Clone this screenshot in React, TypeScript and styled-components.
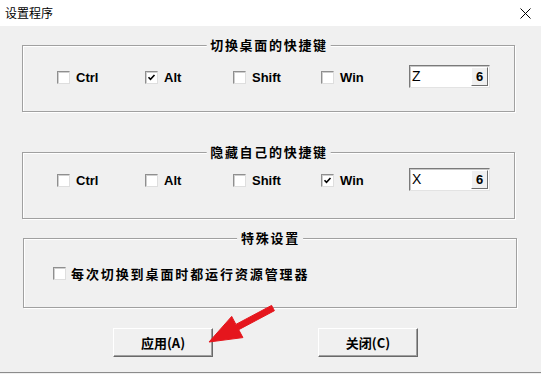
import React from "react";
import styled, { createGlobalStyle } from "styled-components";

const Global = createGlobalStyle`
  * { box-sizing: border-box; }
  html, body { margin: 0; padding: 0; background: #f0f0f0; }
  body { width: 541px; height: 374px; overflow: hidden; }
`;

const Window = styled.div`
  position: relative;
  width: 541px;
  height: 373px;
  background: #f0f0f0;
  border-bottom: 1px solid #8c8c8c;
  display: flex;
  flex-direction: column;
  font-family: "Liberation Sans", "Noto Sans CJK SC", sans-serif;
  color: #000;
`;

const TitleBar = styled.div`
  height: 26px;
  background: #fff;
  display: flex;
  align-items: center;
  justify-content: space-between;
  padding: 0 10px 0 5px;
`;

const TitleText = styled.span`
  font-family: "Noto Sans CJK SC", sans-serif;
  font-size: 12px;
  line-height: 1;
  color: #000;
  margin-top: -1px;
`;

const Group = styled.div<{ $top: number; $left: number; $width: number; $height: number; $padTop: number; $padLeft: number }>`
  position: relative;
  margin-top: ${(p) => p.$top}px;
  margin-left: ${(p) => p.$left}px;
  width: ${(p) => p.$width}px;
  height: ${(p) => p.$height}px;
  border: 1px solid #a0a0a0;
  box-shadow: inset 1px 1px 0 #fff, 1px 1px 0 #fff;
  padding-top: ${(p) => p.$padTop}px;
  padding-left: ${(p) => p.$padLeft}px;
`;

const GroupTitle = styled.span`
  position: absolute;
  top: -9px;
  left: 50%;
  transform: translateX(-50%);
  background: #f0f0f0;
  padding: 0 3px 0 4px;
  font-family: "Noto Sans CJK SC", sans-serif;
  font-weight: 700;
  font-size: 13px;
  line-height: 16px;
  letter-spacing: 1.7px;
  white-space: nowrap;
`;

const KeyRow = styled.div`
  display: grid;
  grid-template-columns: 88px 88px 88px 88px 81px;
  align-items: center;
  height: 23px;
`;

const CheckItem = styled.label`
  display: flex;
  align-items: center;
  gap: 6px;
  margin-top: 2px;
`;

const Box = styled.span`
  width: 13px;
  height: 13px;
  background: #fff;
  border: 1px solid;
  border-color: #8f8f8f #dedede #dedede #8f8f8f;
  box-shadow: inset 1px 1px 0 #cfcfcf;
  display: flex;
  align-items: center;
  justify-content: center;
`;

const KeyLabel = styled.span`
  font-family: "Liberation Sans", sans-serif;
  font-weight: 700;
  font-size: 13px;
  line-height: 1;
`;

const KeyBox = styled.div`
  width: 81px;
  height: 23px;
  background: #fff;
  border: 1px solid;
  border-color: #7a7a7a #e3e3e3 #e3e3e3 #7a7a7a;
  box-shadow: inset 1px 1px 0 #c8c8c8;
  display: flex;
  align-items: stretch;
  justify-content: space-between;
  padding: 1px 1px 1px 2px;
`;

const KeyChar = styled.span`
  font-family: "Liberation Sans", sans-serif;
  font-size: 14px;
  line-height: 19px;
`;

const KeyCode = styled.span`
  width: 17px;
  background: #f0f0f0;
  border: 1px solid;
  border-color: #fff #6e6e6e #6e6e6e #fff;
  font-family: "Liberation Sans", sans-serif;
  font-weight: 700;
  font-size: 13px;
  line-height: 18px;
  text-align: center;
`;

const OptionItem = styled.label`
  display: flex;
  align-items: center;
  gap: 5px;
`;

const OptionText = styled.span`
  font-family: "Noto Sans CJK SC", sans-serif;
  font-weight: 700;
  font-size: 13px;
  line-height: 13px;
  letter-spacing: 1.9px;
`;

const ButtonRow = styled.div`
  display: flex;
  margin-top: 20px;
  padding-left: 113px;
  gap: 105px;
`;

const Button = styled.button`
  width: 100px;
  height: 29px;
  background: #f0f0f0;
  border: 1px solid;
  border-color: #fff #696969 #696969 #fff;
  box-shadow: inset -1px -1px 0 #a0a0a0;
  padding: 0;
  font-family: "Noto Sans CJK SC", sans-serif;
  font-weight: 700;
  font-size: 13px;
  color: #000;
`;

const Arrow = styled.svg`
  position: absolute;
  left: 200px;
  top: 300px;
  pointer-events: none;
`;

const Check = ({ on }: { on: boolean }) => (
  <Box>
    {on && (
      <svg width="9" height="9" viewBox="0 0 9 9">
        <path d="M1.5 4.2 L3.5 6.3 L7.5 2" fill="none" stroke="#000" strokeWidth="1.6" />
      </svg>
    )}
  </Box>
);

const keys = ["Ctrl", "Alt", "Shift", "Win"];

const KeyGroup = ({
  title,
  checked,
  ch,
  top,
  padTop,
}: {
  title: string;
  checked: string;
  ch: string;
  top: number;
  padTop: number;
}) => (
  <Group $top={top} $left={22} $width={493} $height={67} $padTop={padTop} $padLeft={34}>
    <GroupTitle>{title}</GroupTitle>
    <KeyRow>
      {keys.map((k) => (
        <CheckItem key={k}>
          <Check on={k === checked} />
          <KeyLabel>{k}</KeyLabel>
        </CheckItem>
      ))}
      <KeyBox>
        <KeyChar>{ch}</KeyChar>
        <KeyCode>6</KeyCode>
      </KeyBox>
    </KeyRow>
  </Group>
);

export default function App() {
  return (
    <>
      <Global />
      <Window>
        <TitleBar>
          <TitleText>设置程序</TitleText>
          <svg width="11" height="11" viewBox="0 0 11 11">
            <path d="M0.5 0.5 L10.5 10.5 M10.5 0.5 L0.5 10.5" stroke="#000" strokeWidth="1" />
          </svg>
        </TitleBar>
        <KeyGroup title="切换桌面的快捷键" checked="Alt" ch="Z" top={19} padTop={19} />
        <KeyGroup title="隐藏自己的快捷键" checked="Win" ch="X" top={40} padTop={15} />
        <Group $top={19} $left={23} $width={494} $height={70} $padTop={28} $padLeft={29}>
          <GroupTitle>特殊设置</GroupTitle>
          <OptionItem>
            <Check on={false} />
            <OptionText>每次切换到桌面时都运行资源管理器</OptionText>
          </OptionItem>
        </Group>
        <ButtonRow>
          <Button>应用(A)</Button>
          <Button>关闭(C)</Button>
        </ButtonRow>
        <Arrow width="80" height="50" viewBox="0 0 80 50">
          <polygon
            points="74.4,10.7 71.6,5.4 35.9,24.4 31.7,16.4 9,42 42.9,37.6 38.7,29.7"
            fill="#e5161d"
            stroke="#e5161d"
            strokeWidth="1"
            strokeLinejoin="round"
          />
        </Arrow>
      </Window>
    </>
  );
}
